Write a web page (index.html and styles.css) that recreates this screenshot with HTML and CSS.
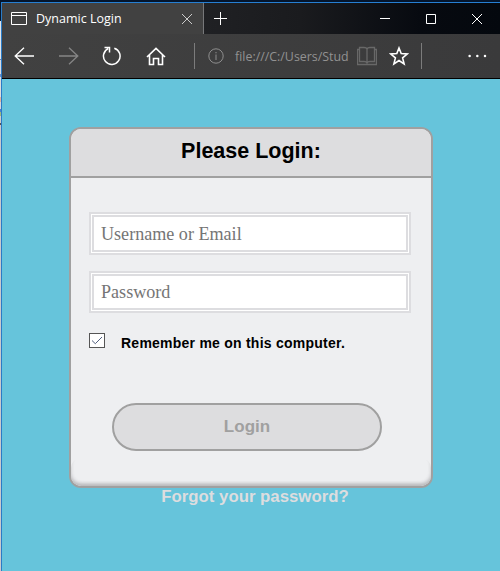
FILE: index.html
```
<!DOCTYPE html>
<html lang="en">
<head>
<meta charset="utf-8">
<title>Dynamic Login</title>
<link rel="stylesheet" href="styles.css">
</head>
<body>
<div class="backdrop"></div>
<div class="window">
  <header class="tabs">
    <div class="tab">
      <svg class="page-icon" width="16" height="14" viewBox="0 0 16 14"><path d="M.5.5h15v12H.5zM.5 3.5h15"/></svg>
      <span class="tab-title">Dynamic Login</span>
      <svg class="tab-close" width="12" height="12" viewBox="0 0 12 12"><path d="M1 1l10 10M11 1L1 11"/></svg>
    </div>
    <svg class="new-tab" width="13" height="13" viewBox="0 0 13 13"><path d="M6.500 0v13M0 6.500h13"/></svg>
    <div class="controls">
      <svg width="10" height="10" viewBox="0 0 10 10"><path d="M0 4.500h10"/></svg>
      <svg width="10" height="10" viewBox="0 0 10 10"><path d="M.5.5h9v9h-9z"/></svg>
      <svg width="10" height="10" viewBox="0 0 10 10"><path d="M0 0l10 10M10 0L0 10"/></svg>
    </div>
  </header>
  <nav class="toolbar">
    <svg class="back" width="20" height="18" viewBox="0 0 20 18"><path d="M10 .7L1.200 9l8.800 8.300M1.200 9H20"/></svg>
    <svg class="forward" width="20" height="18" viewBox="0 0 20 18"><path d="M10 .7L18.800 9 10 17.300M18.800 9H0"/></svg>
    <svg class="reload" width="20" height="20" viewBox="0 0 20 20"><path d="M12.300 2.200A8.300 8.300 0 1 1 6.200 2.600M2.500 1.600h5v5"/></svg>
    <svg class="home" width="20" height="19" viewBox="0 0 20 19"><path d="M1 10l9-8.600L19 10M3.500 8v9.500h4v-6h5v6h4V8"/></svg>
    <i class="divider"></i>
    <svg class="info" width="16" height="16" viewBox="0 0 16 16"><circle cx="8" cy="8" r="7.200"/><path d="M8 6.500V12M8 4v1.300"/></svg>
    <span class="address">file:///C:/Users/Stud</span>
    <svg class="reader" width="20" height="20" viewBox="0 0 20 20"><path d="M2.500 1.500H7Q10 1.500 10 3.500q0-2 3-2h4.500v14H13q-3 0-3 2 0-2-3-2H2.500zM10 3.500v14M2.500 3.500h-2v15h19v-15h-2"/></svg>
    <svg class="star" width="20" height="20" viewBox="0 0 20 20"><path d="M10 2l2.200 5.600 6 .4-4.600 3.900 1.500 6L10 14.500l-5.100 3.400 1.500-6L1.800 8l6-.4z"/></svg>
    <i class="divider second"></i>
    <svg class="more" width="19" height="4" viewBox="0 0 19 4"><circle cx="1.600" cy="2" r="1.250"/><circle cx="9.300" cy="2" r="1.250"/><circle cx="17" cy="2" r="1.250"/></svg>
  </nav>
  <main>
    <form class="card">
      <h1>Please Login:</h1>
      <div class="fields">
        <input class="field first" type="text" placeholder="Username or Email">
        <input class="field" type="text" placeholder="Password">
        <div class="remember">
          <svg class="check" width="16" height="15" viewBox="0 0 16 15"><rect x=".5" y=".5" width="15" height="14"/><path d="M3 7.500l3.300 3.200L13 4"/></svg>
          <span>Remember me on this computer.</span>
        </div>
      </div>
      <button class="login" type="button">Login</button>
      <div class="card-foot"></div>
    </form>
    <p class="forgot">Forgot your password?</p>
  </main>
</div>
</body>
</html>
```
FILE: styles.css
```
* { box-sizing: border-box; }

body {
  margin: 0;
  width: 500px;
  height: 571px;
  display: flex;
  overflow: hidden;
  background: #04152c;
  font-family: "Liberation Sans", Arial, sans-serif;
}

svg {
  display: block;
  flex: none;
  fill: none;
  stroke: #fff;
}

.backdrop {
  width: 1px;
  margin-top: 21px;
  background: linear-gradient(#dfe3ea 0 38px, #6d83b0 38px 39px, #d8dbe3 39px 53px, #6a8fce 53px 56px, #ddd 56px 76px, #e2b59d 76px 81px, #d5d5da 81px 88px, #4a7fd0 88px 91px, #9fba7c 91px 95px, #ccc 95px 102px, #555 102px 104px, #c9c9cc 104px);
}

.window {
  width: 499px;
  margin-top: 2px;
  border-top: 1px solid #267fd3;
  border-left: 1px solid #2a7bc6;
  display: flex;
  flex-direction: column;
}

.tabs {
  height: 31px;
  display: flex;
  align-items: center;
  background: linear-gradient(90deg, #202124 40%, #1a1b1e 60%, #070a10 84%, #04080e);
}

.tab {
  width: 202px;
  height: 31px;
  padding-left: 9px;
  display: flex;
  align-items: center;
  background: #414141;
  border-right: 1px solid #77787a;
}

.page-icon { margin-right: 9px; }

.tab-title {
  width: 145px;
  white-space: nowrap;
  font: 12.5px "Open Sans", "Noto Sans", sans-serif;
  color: #fff;
}

.tab-close { stroke: #ccc; }
.new-tab { margin-left: 10px; }

.controls {
  margin-left: auto;
  margin-right: 18px;
  display: flex;
  gap: 36px;
}

.toolbar {
  height: 45px;
  display: flex;
  align-items: center;
  background: linear-gradient(90deg, #414141, #3a3a3b);
  border-bottom: 1px solid #000;
}

.back, .forward { stroke-width: 1.3; }
.back { margin-left: 12px; }
.forward { margin-left: 25px; stroke: #858585; }
.reload { margin-left: 23px; stroke-width: 1.5; }
.home { margin-left: 24px; stroke-width: 1.6; }

.divider {
  width: 1px;
  height: 26px;
  margin-left: 28px;
  background: #7c7c7c;
}

.info { margin-left: 13px; stroke: #8e8e8e; }

.address {
  width: 115px;
  margin-left: 11px;
  white-space: nowrap;
  font: 12.4px "Open Sans", "Noto Sans", sans-serif;
  color: #929292;
}

.reader { margin-left: 7px; stroke: #686868; stroke-width: 1.3; }
.star { margin-left: 12px; stroke-width: 1.6; }
.divider.second { margin-left: 12px; }
.more { margin-left: 46px; fill: #fff; stroke: none; }

main {
  flex: 1;
  padding: 48px 0 0 67px;
  background: #66c4db;
}

.card {
  width: 364px;
  height: 361px;
  display: flex;
  flex-direction: column;
  overflow: hidden;
  background: #eeeff1;
  border: 2px solid #a0a0a0;
  border-radius: 12px;
}

h1 {
  height: 49px;
  margin: 0;
  border-bottom: 2px solid #a0a0a0;
  background: #dddddf;
  text-align: center;
  font-size: 21.5px;
  line-height: 45px;
  color: #000;
}

.fields {
  padding: 34px 18px 0;
  display: flex;
  flex-direction: column;
}

.field {
  width: 322px;
  height: 42px;
  margin: 0;
  padding: 1px 7px 0;
  border: 5px double #dddde0;
  border-radius: 0;
  background: #fff;
  font: 18.1px "Liberation Serif", "Times New Roman", serif;
}

.field.first { height: 43px; margin-bottom: 16px; padding-top: 2px; }
.field::placeholder { color: #757575; opacity: 1; }

.remember {
  height: 20px;
  margin-top: 20px;
  display: flex;
  gap: 16px;
  font-size: 14px;
  font-weight: bold;
  line-height: 20px;
  letter-spacing: 0.24px;
  color: #000;
}

.check { stroke: #555; fill: #fff; }
.check path { stroke: #526080; fill: none; }

.login {
  width: 270px;
  height: 48px;
  margin: 50px 0 0 41px;
  flex: none;
  border: 2px solid #a0a0a0;
  border-radius: 24px;
  background: #dddddf;
  font: bold 17px "Liberation Sans", Arial, sans-serif;
  color: #a0a0a0;
}

.card-foot {
  height: 28px;
  margin-top: auto;
  border-radius: 10px;
  box-shadow: inset 0 -3px 4px -2px #b5b5b7, inset 2px -4px 4px -3px #c4c4c6, inset -2px -4px 4px -3px #c4c4c6;
}

.forgot {
  width: 370px;
  margin: -1px 0 0 1px;
  text-align: center;
  font-size: 16.8px;
  font-weight: bold;
  line-height: 20px;
  color: #dddddf;
}
```
